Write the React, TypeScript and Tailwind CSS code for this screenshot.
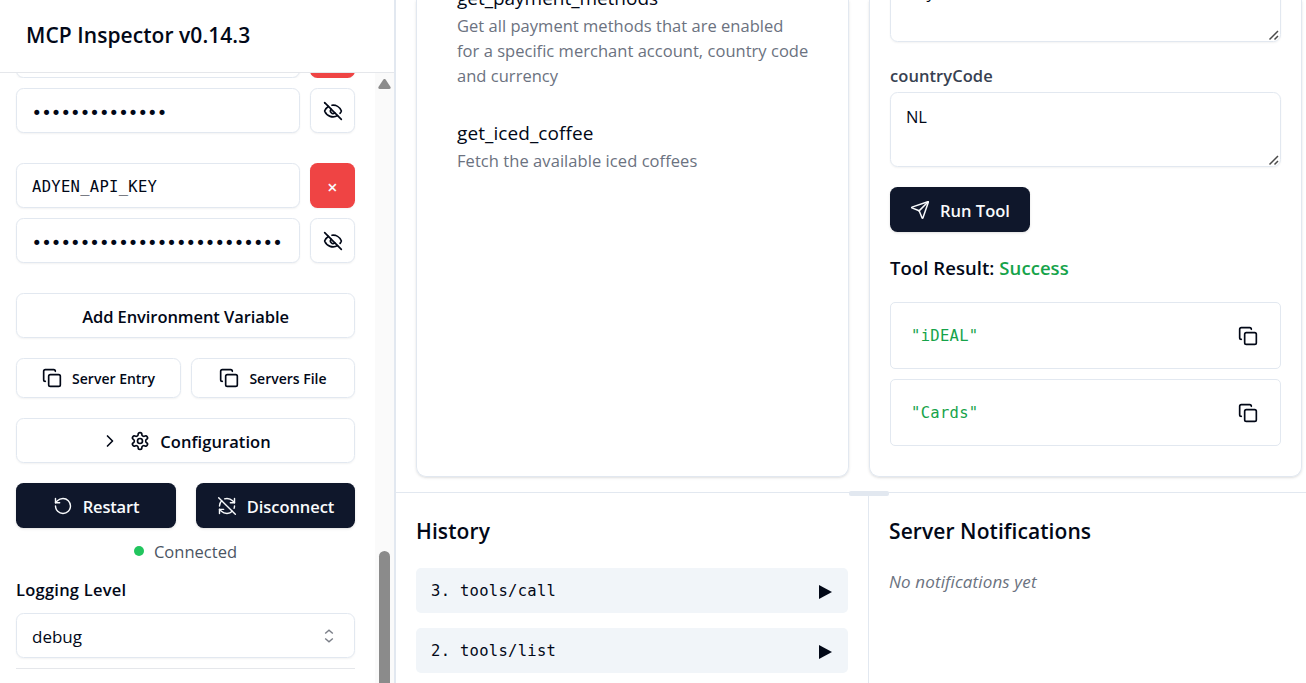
import type { ReactNode } from "react";
import { ChevronRight, Copy, EyeOff, RefreshCwOff, RotateCcw, Send } from "lucide-react";

const mono = "font-['DejaVu_Sans_Mono',monospace] text-[15.5px] tracking-[0.3px]";

function Gear() {
  return (
    <svg
      width="20"
      height="20"
      viewBox="0 0 24 24"
      fill="none"
      stroke="currentColor"
      strokeWidth="2"
      strokeLinecap="round"
      strokeLinejoin="round"
    >
      <path d="M12.220 2h-.44a2 2 0 0 0-2 2v.18a2 2 0 0 1-1 1.730l-.43.25a2 2 0 0 1-2 0l-.15-.08a2 2 0 0 0-2.730.73l-.22.38a2 2 0 0 0 .73 2.730l.15.1a2 2 0 0 1 1 1.720v.51a2 2 0 0 1-1 1.740l-.15.09a2 2 0 0 0-.73 2.730l.22.38a2 2 0 0 0 2.730.73l.15-.08a2 2 0 0 1 2 0l.43.25a2 2 0 0 1 1 1.730V20a2 2 0 0 0 2 2h.44a2 2 0 0 0 2-2v-.18a2 2 0 0 1 1-1.730l.43-.25a2 2 0 0 1 2 0l.15.08a2 2 0 0 0 2.730-.73l.22-.39a2 2 0 0 0-.73-2.730l-.15-.08a2 2 0 0 1-1-1.740v-.5a2 2 0 0 1 1-1.740l.15-.09a2 2 0 0 0 .73-2.730l-.22-.38a2 2 0 0 0-2.730-.73l-.15.08a2 2 0 0 1-2 0l-.43-.25a2 2 0 0 1-1-1.730V4a2 2 0 0 0-2-2z" />
      <circle cx="12" cy="12" r="3" />
    </svg>
  );
}

function Field({ children }: { children?: ReactNode }) {
  return (
    <div className="flex h-[45px] w-[284px] shrink-0 items-center rounded-[7.5px] border border-[#e2e8f0] bg-white pt-[5px] pl-[15px] shadow-xs">
      {children}
    </div>
  );
}

function IconButton({ children, danger }: { children?: ReactNode; danger?: boolean }) {
  return (
    <button
      className={
        danger
          ? "flex size-[45px] shrink-0 items-center justify-center rounded-[7.5px] bg-[#ef4444] text-slate-50 shadow-xs"
          : "flex size-[45px] shrink-0 items-center justify-center rounded-[7.5px] border border-[#e2e8f0] bg-white shadow-xs"
      }
    >
      {children}
    </button>
  );
}

function Secret({ length }: { length: number }) {
  return (
    <div className="flex gap-[10px]">
      <Field>
        <span className="ml-[-0.5px] pt-px font-['DejaVu_Sans_Mono',monospace] text-[17.5px] leading-none tracking-[-0.91px]">
          {"•".repeat(length)}
        </span>
      </Field>
      <IconButton>
        <EyeOff size={20} strokeWidth={2} />
      </IconButton>
    </div>
  );
}

function Sidebar() {
  return (
    <aside className="flex h-full w-[396px] shrink-0 flex-col border-r-2 border-[#e2e8f0]">
      <header className="flex h-[73px] shrink-0 items-center border-b border-gray-200 pl-[26px]">
        <h1 className="text-[21px] font-semibold tracking-[0.06px]">MCP Inspector v0.14.3</h1>
      </header>
      <div className="flex min-h-0 flex-1">
        <div className="flex w-[375px] flex-col overflow-hidden pr-5 pl-4">
          <div className="flex h-[5px] shrink-0 items-end gap-[10px] overflow-hidden">
            <Field />
            <IconButton danger />
          </div>
          <div className="mt-[10px]">
            <Secret length={14} />
          </div>
          <div className="mt-[30px] flex gap-[10px]">
            <Field>
              <span className={mono}>ADYEN_API_KEY</span>
            </Field>
            <IconButton danger>
              <span className="pt-[3px] text-[18px] font-semibold">×</span>
            </IconButton>
          </div>
          <div className="mt-[10px]">
            <Secret length={26} />
          </div>
          <button className="mt-[30px] flex h-[45px] shrink-0 items-center justify-center rounded-[7.5px] border border-[#e2e8f0] pt-[3px] text-[16.5px] font-semibold tracking-[-0.08px] shadow-xs">
            Add Environment Variable
          </button>
          <div className="mt-5 grid shrink-0 grid-cols-[165px_164px] gap-[10px]">
            <button className="flex h-10 items-center justify-center gap-[10px] rounded-[7.5px] border border-[#e2e8f0] text-[14px] font-semibold tracking-[0px] shadow-xs">
              <Copy size={20} />
              Server Entry
            </button>
            <button className="flex h-10 items-center justify-center gap-[10px] rounded-[7.5px] border border-[#e2e8f0] text-[14px] font-semibold tracking-[0px] shadow-xs">
              <Copy size={20} />
              Servers File
            </button>
          </div>
          <button className="mt-5 flex h-[45px] shrink-0 items-center justify-center gap-[10px] rounded-[7.5px] border border-[#e2e8f0] text-[16.5px] font-semibold tracking-[0.08px] shadow-xs">
            <ChevronRight size={20} />
            <Gear />
            <span className="pt-[3px]">Configuration</span>
          </button>
          <div className="mt-5 grid shrink-0 grid-cols-[160px_159px] gap-5">
            <button className="flex h-[45px] items-center justify-center gap-[10px] rounded-[7.5px] bg-slate-900 text-[16.5px] font-semibold tracking-[-0.2px] text-slate-50 shadow-sm">
              <RotateCcw size={20} strokeWidth={1.7} />
              <span className="pt-[3px]">Restart</span>
            </button>
            <button className="flex h-[45px] items-center justify-center gap-[10px] rounded-[7.5px] bg-slate-900 text-[16.5px] font-semibold tracking-[-0.05px] text-slate-50 shadow-sm">
              <RefreshCwOff size={20} strokeWidth={1.7} />
              <span className="pt-[3px]">Disconnect</span>
            </button>
          </div>
          <div className="mt-[11px] flex h-[25px] shrink-0 items-center justify-center gap-[10px] text-[16.5px] tracking-[0.03px] text-[#4b5563]">
            <span className="mb-[2px] size-[10px] rounded-full bg-[#22c55e]" />
            <span className="pt-px">Connected</span>
          </div>
          <div className="mt-[13px] flex h-[26px] shrink-0 items-center text-[16.5px] font-semibold tracking-[0.24px]">
            Logging Level
          </div>
          <div className="mt-[10px] flex h-[45px] shrink-0 items-center justify-between rounded-[7.5px] border border-[#e2e8f0] pr-[15px] pl-[15px] text-[17px] tracking-[0px] shadow-xs">
            <span className="pt-[2px]">debug</span>
            <svg
              width="20"
              height="20"
              viewBox="0 0 20 20"
              fill="none"
              stroke="#7b7f88"
              strokeWidth="1.4"
            >
              <path d="M6.200 7.600 10 4.200l3.800 3.400M6.200 12.400l3.800 3.400 3.800-3.400" />
            </svg>
          </div>
          <div className="mt-[10px] h-px shrink-0 bg-gray-200" />
        </div>
        <div className="flex w-[19px] flex-col items-center bg-[#fafafa] pt-[6px]">
          <svg width="13" height="10" viewBox="0 0 13 10" fill="#8b8b8b">
            <path d="M5.200.8a1.600 1.600 0 0 1 2.600 0l4.600 7C13 9 12.600 10 11.400 10H1.600C.4 10 0 9 .6 7.800z" />
          </svg>
          <div className="mt-[462px] w-[11px] flex-1 rounded-t-full bg-[#8b8b8b]" />
        </div>
      </div>
    </aside>
  );
}

function ResizeGrip() {
  return (
    <svg
      className="absolute right-0 bottom-0"
      width="12"
      height="12"
      viewBox="0 0 12 12"
      stroke="#4a4a4a"
      strokeWidth="1.5"
      fill="none"
    >
      <path d="M1.500 10.500l8.500-8.500M6.500 10.500l3.500-3.500" />
    </svg>
  );
}

function TextArea({ children }: { children: ReactNode }) {
  return (
    <div className="relative h-[75px] shrink-0 rounded-[7.5px] border border-[#e2e8f0] px-[15px] pt-[11px] text-[16.5px] leading-[25px] tracking-[-0.05px] shadow-xs">
      {children}
      <ResizeGrip />
    </div>
  );
}

function ResultRow({ value }: { value: string }) {
  return (
    <div className="flex h-[67px] shrink-0 items-center justify-between rounded-[5px] border border-[#e2e8f0] pr-[22px] pl-5">
      <span className={mono + " pt-[2px] text-[#16a34a]"}>"{value}"</span>
      <Copy size={20} />
    </div>
  );
}

function HistoryRow({ label }: { label: string }) {
  return (
    <div className="flex h-[45px] w-[432px] items-center justify-between rounded-[5px] bg-slate-100 pr-[16px] pl-[15px]">
      <span className={mono + " pt-[3px]"}>{label}</span>
      <svg className="mt-[3px]" width="13" height="14" viewBox="0 0 13 14" fill="currentColor">
        <path d="M0 0l13 7L0 14z" />
      </svg>
    </div>
  );
}

export default function App() {
  return (
    <div className="flex h-[683px] w-[1306px] overflow-hidden bg-white font-['Open_Sans',sans-serif] text-[#020817]">
      <Sidebar />
      <main className="flex min-w-0 flex-1 flex-col">
        <section className="flex h-[492px] shrink-0 gap-5 overflow-hidden pb-[15px] pl-5">
          <div className="flex w-[433px] shrink-0 flex-col rounded-b-[10px] border border-t-0 border-[#e2e8f0] pl-10 shadow-sm">
            <div className="mt-[-14px] h-[27px] text-[19px] leading-[25px] tracking-[-0.03px]">
              get_payment_methods
            </div>
            <div className="text-[16.5px] leading-[25px] tracking-[0.03px] whitespace-nowrap text-[#6b7280]">
              <p>Get all payment methods that are enabled</p>
              <p>for a specific merchant account, country code</p>
              <p>and currency</p>
            </div>
            <div className="mt-[32px] text-[19px] leading-[27px] tracking-[0.08px]">
              get_iced_coffee
            </div>
            <p className="text-[16.5px] leading-[27px] tracking-[0.06px] text-[#6b7280]">
              Fetch the available iced coffees
            </p>
          </div>
          <div className="flex w-[433px] shrink-0 flex-col rounded-b-[10px] border border-t-0 border-[#e2e8f0] px-5 shadow-sm">
            <div className="mt-[-33px]">
              <TextArea>AdyenTest</TextArea>
            </div>
            <div className="mt-[20px] mb-[5px] h-[25px] text-[16.5px] leading-[27px] font-semibold tracking-[0.07px] text-[#374151]">
              countryCode
            </div>
            <TextArea>NL</TextArea>
            <button className="mt-5 flex h-[45px] w-[140px] shrink-0 items-center justify-center gap-[10px] rounded-[7.5px] bg-slate-900 text-[16.5px] font-semibold tracking-[0px] text-slate-50 shadow-sm">
              <Send size={20} strokeWidth={1.8} />
              <span className="pt-[3px]">Run Tool</span>
            </button>
            <h4 className="mt-[22px] h-[28px] text-[18.5px] leading-[28px] font-semibold tracking-[0.06px]">
              Tool Result: <span className="text-[#16a34a]">Success</span>
            </h4>
            <div className="mt-5 flex flex-col gap-[10px]">
              <ResultRow value="iDEAL" />
              <ResultRow value="Cards" />
            </div>
          </div>
        </section>
        <section className="relative flex min-h-0 flex-1 border-t border-[#e2e8f0]">
          <div className="absolute top-[-2px] left-[453px] h-[5px] w-10 rounded-[2px] bg-[#e2e8f0]" />
          <div className="w-[473px] border-r border-[#e2e8f0] pt-[20px] pl-5">
            <h2 className="h-[35px] pt-px text-[21px] leading-[35px] font-semibold tracking-[0.1px]">
              History
            </h2>
            <div className="mt-5 flex flex-col gap-[15px]">
              <HistoryRow label="3. tools/call" />
              <HistoryRow label="2. tools/list" />
            </div>
          </div>
          <div className="pt-[20px] pl-5">
            <h2 className="h-[35px] pt-px text-[21px] leading-[35px] font-semibold tracking-[0.08px]">
              Server Notifications
            </h2>
            <p className="mt-5 text-[17px] leading-[27px] tracking-[0.13px] text-[#6b7280] italic">
              No notifications yet
            </p>
          </div>
        </section>
      </main>
    </div>
  );
}
